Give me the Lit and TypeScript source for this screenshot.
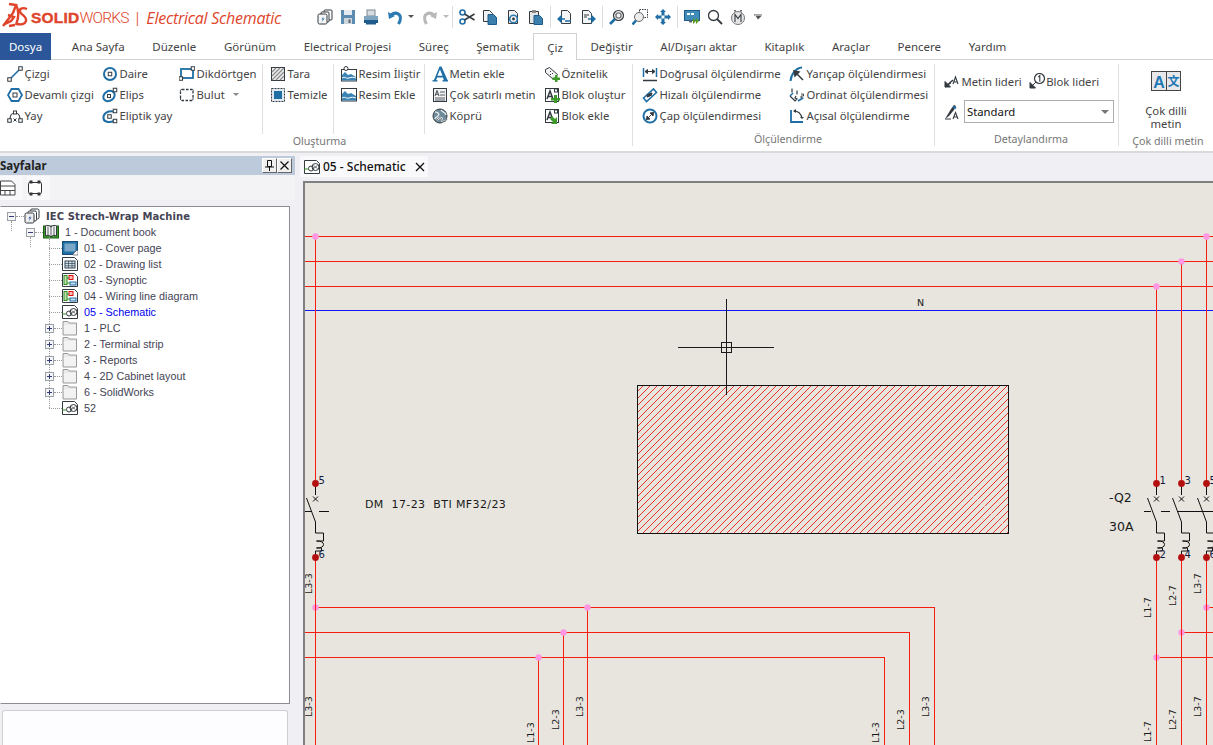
import { LitElement, html, css, svg } from "lit";
import { customElement } from "lit/decorators.js";

const B = "#1f6ea5";
const D = "#333a40";
const G = "#3f9a2c";
const node = (x: number, y: number, s = 3.5) => svg`<rect x=${x - s / 2} y=${y - s / 2} width=${s} height=${s} fill="#fff" stroke=${D} stroke-width="1"/>`;

const icons: Record<string, any> = {
  line: svg`<path d="M3 13L13 3" stroke=${B} stroke-width="1.6"/>${node(2.5, 13.5)}${node(13.5, 2.5)}`,
  circle: svg`<circle cx="8" cy="8" r="6" fill="none" stroke=${B} stroke-width="2"/>${node(8, 8)}`,
  poly: svg`<path d="M4.5 2h7L15 8l-3.5 6h-7L1 8z" fill="none" stroke=${B} stroke-width="1.8"/>${node(8, 8, 4)}`,
  arc: svg`<path d="M3 11C3 3 13 3 13 11" fill="none" stroke=${D} stroke-width="1.2"/>${node(2.5, 12.5)}${node(13.5, 12.5)}${node(8, 4.5, 3)}<path d="M6.5 10.5l3 3m0-3l-3 3" stroke=${D}/>`,
  ellipse: svg`<ellipse cx="7" cy="9" rx="6" ry="4.8" transform="rotate(-35 7 9)" fill="none" stroke=${B} stroke-width="2"/>${node(7, 9, 3)}${node(13, 3, 3.5)}`,
  earc: svg`<path d="M11 3.5C4 2.5 1 7 1.5 10.5 2 14 7 15 12 13" fill="none" stroke=${B} stroke-width="2"/>${node(7.5, 8.5)}${node(13, 3)}${node(13, 13)}`,
  rect: svg`<rect x="2" y="3" width="12" height="9" fill="none" stroke=${B} stroke-width="1.8"/>${node(14, 2.5)}${node(1.8, 12.5)}`,
  cloud: svg`<path d="M3 2.5h2.5M7 2.5h2.500M11 2.500h2M14 4v2.500M14 8v2.500M13 13.500h-2.500M9 13.500H6.500M5 13.500H3M1.500 11V8.500M1.500 7V4.500" stroke=${D} stroke-width="1.3"/><path d="M1.500 4.500C1 3 2 2 3 2.500M13 2.500c1-.5 1.500.500 1 1.500M14 10.500c.5 1.500-.500 3-1 3M3 13.500c-1 0-2-1-1.500-2.500" fill="none" stroke=${D}/>`,
  hatch: svg`<rect x="1.500" y="1.500" width="13" height="13" fill="#eee" stroke=${D}/><path d="M2 6l4-4M2 10l8-8M2 14L14 2M6 14l8-8M10 14l4-4" stroke="#8a8a8a" stroke-width="1.200"/>`,
  clear: svg`<rect x="1.500" y="1.500" width="13" height="13" fill="#dfe9f1" stroke=${D} stroke-dasharray="2 1"/><rect x="4" y="4" width="8" height="8" fill=${B}/>`,
  pic: svg`<rect x=".5" y="3.500" width="15" height="11.500" fill="#fff" stroke=${D}/><path d="M1 9l3-3 3 3 3-1 5 3v3.500H1z" fill="#3a83b5"/><path d="M1 12c3-2 4 1 7 0s4-1 7 0" fill="none" stroke="#fff"/><circle cx="5" cy="2.500" r="2" fill="#fff" stroke=${D}/>`,
  pic2: svg`<rect x=".5" y="1.500" width="15" height="12.500" fill="#fff" stroke=${D}/><path d="M1 7l3-3 3 3 3-1 5 3v4.500H1z" fill="#3a83b5"/><path d="M1 11c3-2 4 1 7 0s4-1 7 0" fill="none" stroke="#fff"/>`,
  bigA: svg`<path d="M.5 15.500h5v-1.200l-1.300-.3 .9-2.500h5.800l.9 2.500-1.300 .3v1.200h6v-1.200l-1-.3L9.500 .5H7.500L2 14l-1.500 .3zM5.400 9.800L8 3.500l2.500 6.300z" fill=${B} fill-rule="evenodd"/>`,
  mtext: svg`<rect x="1.500" y="1.500" width="13" height="13" fill="#f1f1f1" stroke=${D}/><path d="M3 9l2-5.500L7 9M3.800 7.200h2.400" fill="none" stroke=${D} stroke-width=".9"/><path d="M8 5h5M8 8h5M3 11h10M3 13h10" stroke=${D} stroke-width=".8"/>`,
  globe: svg`<circle cx="8" cy="8" r="7" fill="#6f8a9a" stroke=${D}/><path d="M3 4c3 0 5 2 3 4S3 9 3 11M9 2c1 2 5 2 5 5" fill="none" stroke="#dfe6ea" stroke-width="1.500"/><path d="M5 12c2-3 5-3 5 0s4 2 5-1" fill="none" stroke="#fff" stroke-width="2"/><path d="M5 12c2-3 5-3 5 0s4 2 5-1" fill="none" stroke=${D} stroke-width=".8"/>`,
  tag: svg`<path d="M1.500 3.500l4-2 8 7-4 5-8-7z" fill="#f3f3f3" stroke=${D}/><path d="M6 5l1 1M8 7l1 1M6 8l1 1" stroke=${D}/><path d="M11 9h2.500v2.500H16V14h-2.500v2H11v-2H8.500v-2.500H11z" fill=${G}/>`,
  blockAdd: svg`<rect x="1.500" y="1.500" width="13" height="13" fill="#fff" stroke=${D}/><path d="M3 12l3-8 3 8M4.200 9.500h3.600" fill="none" stroke=${D} stroke-width="1.500"/>${node(12, 3.5, 3)}<path d="M10 8h3v3h3v2.500h-3v2.500h-3v-2.500H7V11h3z" fill=${G}/>`,
  blockIns: svg`<rect x="1.500" y="1.500" width="13" height="13" fill="#fff" stroke=${D}/><path d="M3 12l3-8 3 8M4.200 9.500h3.600" fill="none" stroke=${D} stroke-width="1.500"/>${node(12, 3.5, 3)}<path d="M8 8l3 3 2-2v7H7l2-2-3-3z" fill=${G}/>`,
  dimH: svg`<path d="M1 14.500h14" stroke=${D} stroke-width="1.500"/><path d="M1.500 2v9M14.500 2v9" stroke=${B} stroke-width="1.500"/><path d="M3 5.500h10M3 5.500l2.500-2v4zM13 5.500l-2.500-2v4z" stroke=${D} fill=${D}/>`,
  dimA: svg`<path d="M1.500 11l10-9 3 3.500-10 9z" fill="#fff" stroke=${B} stroke-width="1.600"/><path d="M5 10l5-4M5 10l1-3 2 2zM10 6l-1 3-2-2z" stroke=${D} fill=${D}/>`,
  dimD: svg`<circle cx="8" cy="8" r="6.500" fill="none" stroke=${B} stroke-width="2"/><path d="M4.500 11.500l7-7M4.500 11.500l.5-3.500 3 3zM11.500 4.500l-.5 3.500-3-3z" stroke=${D} fill=${D}/>`,
  dimR: svg`<path d="M1.500 15C2 8 7 2 13 1.500" fill="none" stroke=${B} stroke-width="2"/><path d="M14 14L6 6M5 5l5 1-4 4z" stroke=${D} fill=${D} stroke-width="1.500"/>`,
  dimO: svg`<path d="M3 1.500v4M8 3.500v4" stroke=${D} stroke-width="1.200"/><path d="M12 7h2.500v2H12v2h2.500" fill="none" stroke=${D} stroke-width=".9"/><path d="M1 9l5 5 2-2-2-1 1-2" fill="none" stroke=${D} stroke-width="1.200"/><path d="M9 14l5-3" stroke=${B} stroke-width="1.600"/><path d="M1 9l3-3" stroke=${B} stroke-width="1.400"/>`,
  dimAng: svg`<path d="M2 2v12h12" fill="none" stroke=${B} stroke-width="1.800"/><path d="M5 3c4 0 7 3 8 7" fill="none" stroke=${D} stroke-width="1.200"/><path d="M4 3l3-2v4zM13 11l-2-2h4z" fill=${D}/>`,
  leadA: svg`<path d="M1 14l6-4M1 14V8.500L6.500 14z" fill=${D} stroke=${D}/><path d="M1 14L9 7" stroke=${D} stroke-width="1.500"/><path d="M9 11l2.500-7L14 11M10 9h3" fill="none" stroke=${D} stroke-width="1.100"/>`,
  leadB: svg`<path d="M1 15l6-6M1 15V9.500L6.500 15z" fill=${D} stroke=${D}/><circle cx="10.500" cy="5.500" r="5" fill="#fff" stroke=${D} stroke-width="1.200"/><path d="M9.300 4.200l1.500-1.500v6" fill="none" stroke=${D} stroke-width="1.100"/>`,
  style: svg`<path d="M1 15L7 5l3-4 2 1-2 4-5 6z" fill=${D}/><path d="M9 3l3 1" stroke=${B} stroke-width="2"/><path d="M1 15h6" stroke=${D}/><path d="M9 15l2.500-6.500L14 15M10 13h3" fill="none" stroke=${D} stroke-width="1.100"/>`,
  stack: svg`<rect x="7" y="1" width="8" height="10" rx="1" fill="#fff" stroke=${D}/><rect x="4" y="3" width="8" height="10" rx="1" fill="#fff" stroke=${D}/><rect x="1" y="5" width="9" height="10" rx="1.500" fill="#f5f5f5" stroke=${D}/><path d="M6.500 7.500l-2 3h1.500l-1.500 3 3-4H6z" fill=${B}/>`,
  save: svg`<path d="M1 1h14v14H1z" fill="#5b8bb0"/><rect x="4" y="1" width="8" height="5" fill="#e4eaef"/><rect x="4" y="9" width="8" height="6" fill="#cfd6db"/><rect x="8.500" y="10.500" width="2" height="3.500" fill="#567"/>`,
  print: svg`<rect x="4" y="1" width="8" height="6" fill="#d8dde1" stroke="#7c8790"/><path d="M1 7h14v7H1z" fill="#7ea4c0"/><rect x="1" y="11" width="14" height="3" fill="#1d5c8d"/><rect x="3" y="14" width="10" height="1.500" fill="#1d5c8d"/>`,
  undo: svg`<path d="M3 6c5-4 11-1 9 6l-1.500 3" fill="none" stroke="#2b7bb2" stroke-width="3"/><path d="M0 3l1 7 6-3z" fill="#2b7bb2"/>`,
  redo: svg`<path d="M13 6C8 2 2 5 4 12l1.500 3" fill="none" stroke="#b8b8b8" stroke-width="3"/><path d="M16 3l-1 7-6-3z" fill="#b8b8b8"/>`,
  cut: svg`<circle cx="3.500" cy="3.500" r="2.500" fill="none" stroke=${B} stroke-width="1.600"/><circle cx="3.500" cy="12.500" r="2.500" fill="none" stroke=${B} stroke-width="1.600"/><path d="M5.500 5l10 6M5.500 11l10-6" stroke=${D} stroke-width="1.500"/>`,
  copy: svg`<path d="M1.500 1.500h6l3 3v8h-9z" fill="#f2f2f2" stroke=${D}/><path d="M6 5.500h5.500l3 3v7H6z" fill="#3b7fad" stroke="#1d5c8d"/>`,
  copyg: svg`<path d="M3.500 1.500h6l3 3v10h-9z" fill="#f2f2f2" stroke=${D}/><circle cx="8.500" cy="10" r="3.800" fill="none" stroke="#2b7bb2" stroke-width="1.600"/><circle cx="8.500" cy="10" r="1.400" fill=${D}/>`,
  paste: svg`<path d="M1.500 2.500h9v12h-9z" fill="#e6e6e6" stroke=${D}/><rect x="4" y="1" width="4" height="3" fill="#888"/><path d="M6 6.500h5.500l3 3v6H6z" fill="#3b7fad" stroke="#1d5c8d"/>`,
  pageL: svg`<path d="M4.500 1.500h6l3 3v10h-9z" fill="#f5f5f5" stroke=${D}/><path d="M1 10h7M1 10l3-3v6zM8 12h6" stroke=${B} fill=${B} stroke-width="1.300"/>`,
  pageR: svg`<path d="M2.500 1.500h6l3 3v10h-9z" fill="#f5f5f5" stroke=${D}/><path d="M8 10h7M15 10l-3-3v6z" stroke=${B} fill=${B} stroke-width="1.300"/><path d="M4 6h5M4 8h3" stroke=${D}/>`,
  zoom1: svg`<circle cx="9.500" cy="6.500" r="5" fill="#f2f2f2" stroke=${D} stroke-width="1.200"/><circle cx="9.500" cy="6.500" r="2.600" fill="none" stroke="#777" stroke-width="1.400"/><path d="M6 10l-5 5" stroke=${B} stroke-width="2.600"/>`,
  zoom2: svg`<rect x="7.500" y=".5" width="8" height="8" fill="none" stroke=${D} stroke-dasharray="1.500 1"/><circle cx="7" cy="8" r="4.500" fill="#ececec" stroke="#666"/><path d="M4 11.500l-3.500 4" stroke=${B} stroke-width="2.600"/>`,
  pan: svg`<path d="M8 0l3 3H9.500v3.500H13V5l3 3-3 3V9.500H9.500V13H11l-3 3-3-3h1.500V9.500H3V11L0 8l3-3v1.500h3.500V3H5z" fill=${B}/><rect x="6.500" y="6.500" width="3" height="3" fill="#fff"/>`,
  mon: svg`<rect x=".5" y="1.500" width="15" height="10" fill="#3f8cb8" stroke="#1d5c8d"/><rect x="3" y="4" width="3" height="2" fill="#fff"/><rect x="7" y="4" width="3" height="2" fill="#fff"/><rect x="5" y="11.500" width="3" height="2" fill="#666"/><path d="M9 9l3 3-3 3zM12 9l3 3-3 3z" fill="#5c9d1e"/>`,
  mag: svg`<circle cx="6.500" cy="6.500" r="5" fill="none" stroke=${D} stroke-width="1.300"/><path d="M10 10l5 5" stroke=${D} stroke-width="1.800"/>`,
  macro: svg`<circle cx="8" cy="9" r="6.500" fill="#e6e6e6" stroke="#777"/><path d="M5 2.500V1M11 2.500V1" stroke=${D} stroke-width="1.500"/><path d="M5 13V5.500l3 4 3-4V13" fill="none" stroke=${D} stroke-width="1.100"/>`,
  book: svg`<rect x=".5" y="2" width="15" height="12" fill="#3f9a2c" stroke="#1c5e12"/><path d="M8 3C6 1 4 1 2.500 2v10c2-1 4-1 5.500 1 1.500-2 3.500-2 5.500-1V2C12 1 10 1 8 3z" fill="#f5f5f5" stroke=${D}/><path d="M8 3v10M5 2.500v9M11 2.500v9" stroke=${D} stroke-width=".8"/>`,
  tstack: svg`<rect x="6.500" y="1" width="8.500" height="10" rx="1.500" fill="#fff" stroke=${D}/><rect x="4" y="3" width="8.500" height="10" rx="1.500" fill="#fff" stroke=${D}/><rect x="1" y="5" width="9" height="10" rx="1.500" fill="#eee" stroke=${D}/><path d="M6.500 7.500l-2 3h1.500l-1.500 3 3-4H6z" fill="#1f4fa5"/>`,
  cover: svg`<rect x=".5" y="1.500" width="15" height="13" fill="#1f6ea5" stroke="#164e78"/><rect x="2.500" y="3.500" width="11" height="8" fill="#7aa6c8"/><path d="M11 14l4-4 1 1v4h-5z" fill="#fff" stroke=${D} stroke-width=".6"/>`,
  list: svg`<path d="M.5 1.500h12l3 3v10H.5z" fill="#fff" stroke=${D}/><rect x="3" y="5" width="10" height="7" fill="#d7e3ec" stroke="#345"/><path d="M3 7.500h10M3 9.800h10M6.500 5v7M10 5v7" stroke="#345" stroke-width=".7"/>`,
  syn: svg`<path d="M.5 1.500h12l3 3v10H.5z" fill="#fff" stroke=${D}/><rect x="2" y="3.500" width="3" height="9" fill="#bde3b0" stroke="#2f8a20"/><rect x="7" y="3.500" width="4" height="4" fill="#f9b8b8" stroke="#e01010"/><rect x="8" y="10" width="6" height="3" fill="#c7e0f2" stroke=${B}/><path d="M5 6h2M5 11h3" stroke="#2f8a20"/>`,
  sch: svg`<path d="M.5 1.500h12l3 3v10H.5z" fill="#fff" stroke=${D}/><circle cx="7" cy="9.500" r="2.500" fill="none" stroke=${D}/><circle cx="11.500" cy="8" r="3.500" fill="none" stroke=${D}/><path d="M9.500 6.500l4 3M13.500 6.500l-4 3" stroke=${D} stroke-width=".7"/><path d="M0 10h4.500" stroke="#2f8a20"/>`,
  folder: svg`<path d="M1 3V1.500h5L7 3h7.500v12H1z" fill="#e9e9e9" stroke="#9a9a9a"/><path d="M2 5h12v9H2z" fill="#f3f3f3"/>`,
  sheets: svg`<path d="M.5 1h11l3.500 3.500V15H.5z" fill="#fff" stroke="#444"/><path d="M.5 6h14.500M.5 10.500h14.500M5 10.500V15M10 10.500V15" stroke="#444"/>`,
  frame: svg`<rect x="1.500" y="2.500" width="13" height="11" rx="1" fill="#fff" stroke="#333"/><path d="M2.500 .5h3v3h-3zM10.500 .5h3v3h-3zM2.500 12.500h3v3h-3zM10.500 12.500h3v3h-3z" fill="#333"/>`,
};

const ic = (n: string, cls = "") => html`<svg class="ic ${cls}" viewBox="0 0 16 16">${icons[n]}</svg>`;

const tabs = ["Ana Sayfa", "Düzenle", "Görünüm", "Electrical Projesi", "Süreç", "Şematik", "Çiz", "Değiştir", "Al/Dışarı aktar", "Kitaplık", "Araçlar", "Pencere", "Yardım"];

type Item = [string, string, boolean?];
const col = (cls: string, items: Item[]) => html`<div class="col ${cls}">${items.map(([i, t, dd]) => html`<div class="it">${ic(i)}<span>${t}</span>${dd ? html`<i class="dd"></i>` : ""}</div>`)}</div>`;

const qat: string[][] = [
  ["stack", "save", "print", "undo", "*", "redo", "*g"],
  ["cut", "copy", "copyg", "paste"],
  ["pageL", "pageR"],
  ["zoom1", "zoom2", "pan"],
  ["mon", "mag", "macro", "*m"],
];

const treeRows: [string, string, string, string?][] = [
  ["leaf", "cover", "01 - Cover page"],
  ["leaf", "list", "02 - Drawing list"],
  ["leaf", "syn", "03 - Synoptic"],
  ["leaf", "syn", "04 - Wiring line diagram"],
  ["leaf", "sch", "05 - Schematic", "sel"],
  ["fold", "folder", "1 - PLC"],
  ["fold", "folder", "2 - Terminal strip"],
  ["fold", "folder", "3 - Reports"],
  ["fold", "folder", "4 - 2D Cabinet layout"],
  ["fold", "folder", "6 - SolidWorks"],
  ["leaf", "sch", "52"],
];

const RED = "#fa1c0c";
const hl = (x1: number, x2: number, y: number, c = RED) => svg`<line x1=${x1} x2=${x2} y1=${y} y2=${y} stroke=${c} shape-rendering="crispEdges"/>`;
const vl = (x: number, y1: number, y2: number, c = RED) => svg`<line x1=${x} x2=${x} y1=${y1} y2=${y2} stroke=${c} shape-rendering="crispEdges"/>`;
const pink = (x: number, y: number) => svg`<circle cx=${x} cy=${y} r="3.200" fill="#ff97e2"/>`;
const vt = (x: number, y: number, t: string) => svg`<text class="rot" transform="translate(${x} ${y}) rotate(-90)">${t}</text>`;

const pole = (x: number, a: string, b: string) => {
  const p = x + 0.5;
  return svg`
    <path d="M${p} 484V495M${p - 2.500} 496.500l5 5m0-5l-5 5M${p - 9} 498L${p} 522V533H${p + 8}V541H${p + 1}Q${p + 8} 541 ${p + 8} 544.500Q${p + 8} 548 ${p + 1} 548H${p + 6}V551H${p}V557" fill="none" stroke="#111"/>
    ${vl(p, 557, 745)}
    <circle cx=${p} cy="483.500" r="3.400" fill="#b40f0f"/>
    <circle cx=${p} cy="557.500" r="3.400" fill="#b40f0f"/>
    <text class="num" x=${p + 3} y="484">${a}</text>
    <text class="num" x=${p + 3} y="558">${b}</text>`;
};

@customElement("app-root")
export class AppRoot extends LitElement {
  static styles = css`
    :host { display: block; width: 1213px; height: 745px; overflow: hidden; background: #fff; color: #444; font-family: "Noto Sans", "Open Sans", sans-serif; font-size: 11.3px; }
    * { box-sizing: border-box; }
    .ic { width: 16px; height: 16px; flex: none; display: block; }
    .title { height: 33px; display: flex; align-items: center; }
    .logo { width: 317px; flex: none; display: flex; align-items: center; color: #e0452c; white-space: nowrap; padding-left: 1px; padding-top: 3px; }
    .mark { width: 27px; height: 26px; margin: -6px 3px 0 0; flex: none; }
    .solid { font: 900 15.500px "Liberation Sans", sans-serif; letter-spacing: .2px; -webkit-text-stroke: .4px #e0452c; }
    .works { font: 300 15.500px Roboto, sans-serif; letter-spacing: -.8px; }
    .pipe { font: 300 17px Roboto, sans-serif; margin: 0 7px 0 7px; }
    .prod { font: italic 400 16px "Open Sans", sans-serif; letter-spacing: -.25px; }
    .qat { display: flex; align-items: center; }
    .qgroup { display: flex; align-items: center; gap: 7px; padding: 0 6px 0 0; margin-right: 6px; border-right: 1px solid #dcdcdc; height: 22px; }
    .qgroup:first-child { padding-right: 3px; }
    .qgroup:last-child { border: none; }
    .u { margin-left: 2px; }
    .qdd { width: 0; height: 0; border: 3px solid transparent; border-top: 3px solid #555; border-bottom: 0; margin-left: -3px; }
    .qdd.g { border-top-color: #bbb; margin-left: -1px; }
    .qdd.m { width: 8px; height: 6px; border: 0; margin-left: 1px; background: #555; clip-path: polygon(0 0,100% 0,100% 17%,0 17%,0 34%,100% 34%,50% 100%); }

    .tabs { height: 27px; display: flex; border-bottom: 1px solid #d2d2d2; font-size: 11.5px; align-items: stretch; }
    .file { width: 51px; background: #2b579a; color: #fff; display: flex; align-items: center; justify-content: center; margin-bottom: -1px; margin-right: 7px; }
    .tab { padding: 0 13.800px; display: flex; align-items: center; white-space: nowrap; }
    .tab.on { border: 1px solid #d2d2d2; border-bottom: 0; background: #fff; margin-bottom: -1px; padding: 0 12.800px; }

    .ribbon { height: 93px; display: flex; border-bottom: 2px solid #dadada; white-space: nowrap; }
    .group { height: 82px; margin-top: 4px; border-right: 1px solid #dfdfdf; display: flex; flex-direction: column; flex: none; }
    .g1 { width: 633px; padding-left: 7px; }
    .g2 { width: 302px; padding-left: 9px; }
    .g3 { width: 184px; padding-left: 9px; }
    .g4 { flex: 1; border: 0; }
    .body { height: 70px; display: flex; }
    .sub { display: flex; height: 70px; border-right: 1px solid #dfdfdf; padding-left: 7px; }
    .sub.first { padding-left: 0; width: 256px; }
    .sub.s2 { width: 71px; }
    .sub.s3 { width: 91px; }
    .sub.last { border: 0; }
    .label { flex: 1; text-align: center; color: #777; font-size: 10.700px; line-height: 13px; padding-top: 1px; }
    .col { display: flex; flex-direction: column; margin-top: -1px; }
    .c1 { width: 95px; } .c2 { width: 77px; } .c3 { width: 83px; }
    .c4 { width: 64px; } .c5 { width: 84px; } .c6 { width: 112px; } .c7 { width: 81px; }
    .c8 { width: 147px; } .c9 { width: 145px; }
    .it { height: 21px; display: flex; align-items: center; gap: 1.500px; }
    .dd { width: 0; height: 0; border: 3px solid transparent; border-top: 3px solid #888; border-bottom: 0; margin-left: 7px; }
    .det { padding-top: 8px; display: flex; flex-direction: column; }
    .detrow { display: flex; align-items: center; height: 18px; }
    .detrow .it { height: 18px; }
    .detrow .it + .it { margin-left: 7px; }
    .comborow { display: flex; align-items: center; margin-top: 10px; gap: 4px; }
    .combo { width: 150px; height: 23px; border: 1px solid #adadad; display: flex; align-items: center; justify-content: space-between; padding: 0 4px 0 2px; color: #111; }
    .combo i { width: 0; height: 0; border: 4px solid transparent; border-top: 4px solid #777; border-bottom: 0; }
    .multi { display: flex; flex-direction: column; align-items: center; height: 70px; line-height: 13px; text-align: center; padding-top: 7px; width: 94px; }
    .multi svg { width: 30px; height: 20px; margin-bottom: 13px; }
    .g4 .label { width: 98px; white-space: nowrap; }

    .main { display: flex; height: 592px; background: #f0eff4; }
    .left { width: 295px; flex: none; padding-top: 3px; display: flex; flex-direction: column; }
    .phead { height: 19px; background: #bccadc; display: flex; align-items: center; justify-content: space-between; padding-right: 3px; font-weight: 700; color: #222; font-size: 11.500px; }
    .pbtns { display: flex; }
    .pbtn { width: 15px; height: 15px; background: #f0f0f0; border: 1px solid; border-color: #fff #666 #666 #fff; display: flex; align-items: center; justify-content: center; }
    .pbtn svg { width: 9px; height: 11px; display: block; }
    .ptools { height: 25px; display: flex; align-items: center; gap: 4px; background: #f3f3f6; flex: none; margin-bottom: 6px; }
    .ptools .box { width: 23px; height: 24px; display: flex; align-items: center; background: #f8f8fa; }
    .tree { position: relative; width: 290px; height: 498px; background: #fff; border: 1px solid #8c8c94; border-left-color: #fff; padding-top: 1px; flex: none; color: #445; font: 10.800px "Liberation Sans", sans-serif; }
    .row { height: 16px; display: flex; align-items: center; white-space: nowrap; }
    .row span { margin-left: 6px; }
    .r0 { padding-left: 6px; font: 700 10px "DejaVu Sans", sans-serif; letter-spacing: .09px; }
    .r1 { padding-left: 25px; }
    .rl { padding-left: 61px; }
    .rf { padding-left: 44px; }
    .exp { width: 9px; height: 9px; border: 1px solid #9aa0a8; flex: none; position: relative; background: #f5f5f5; }
    .exp::before { content: ""; position: absolute; left: 1px; right: 1px; top: 3px; height: 1px; background: #333a80; }
    .exp.p::after { content: ""; position: absolute; top: 1px; bottom: 1px; left: 3px; width: 1px; background: #333a80; }
    .dot { width: 8px; border-top: 1px dotted #999; flex: none; }
    .row span.sel { color: #0000f0; }
    .vd { position: absolute; border-left: 1px dotted #999; }
    .v1 { left: 10px; top: 14px; height: 10px; }
    .v2 { left: 29px; top: 30px; height: 10px; }
    .v3 { left: 48px; top: 30px; height: 171px; }
    .h3 { position: absolute; left: 48px; width: 13px; border-top: 1px dotted #999; }
    .low { margin: 6px 0 0 2px; width: 286px; flex: 1; background: #fdfcfe; border: 1px solid #d0d0d0; border-bottom: 0; border-radius: 3px 3px 0 0; }
    .right { flex: 1; display: flex; flex-direction: column; padding-left: 5px; min-width: 0; padding-top: 3px; }
    .dtab { width: 128px; height: 21px; background: #f9f9fb; display: flex; align-items: center; padding-left: 4px; color: #111; font-size: 12px; font-weight: 500; border-radius: 2px 2px 0 0; flex: none; }
    .dtab .x { margin-left: auto; margin-right: 3px; width: 10px; height: 10px; }
    .dtab span { margin-left: 3px; }
    .canvas { margin-top: 4px; flex: 1; margin-left: 3px; border-left: 2px solid #808080; border-top: 2px solid #808080; background: #e7e5de; min-height: 0; overflow: hidden; }
    .canvas svg { display: block; width: 908px; height: 562px; }
    .canvas text { font-family: "DejaVu Sans", sans-serif; fill: #1a1a1a; white-space: pre; }
    .canvas .rot { font-size: 9.500px; }
    .canvas .num { font-size: 10px; fill: #101840; }
    .canvas .lbl { font-size: 11px; letter-spacing: .4px; }
    .canvas .n { font-size: 9.500px; }
    .canvas .big { font-size: 12.500px; }
  `;

  render() {
    const holeLines = [236.5, 261.5, 286.5];
    return html`
      <div class="title">
        <div class="logo">
          <svg class="mark" viewBox="0 0 27 26" fill="none" stroke="#e0452c" stroke-width="2.400">
            <path d="M8 2l7 1-3 8M12 11L2 24M7 13l6 2-3 4-6 3"/>
            <path d="M15 3c3 5 3 12 0 20M14 23l-6 1"/>
            <path d="M26 7c-5-2-8 0-7 3s7 4 6 9c-1 3-5 4-9 3"/>
          </svg>
          <span class="solid">SOLID</span><span class="works">WORKS</span><span class="pipe">|</span><span class="prod">Electrical Schematic</span>
        </div>
        <div class="qat">
          ${qat.map((g) => html`<div class="qgroup">${g.map((n) => n === "*" ? html`<i class="qdd"></i>` : n === "*g" ? html`<i class="qdd g"></i>` : n === "*m" ? html`<i class="qdd m"></i>` : ic(n, n === "undo" ? "u" : ""))}</div>`)}
        </div>
      </div>
      <div class="tabs">
        <div class="file">Dosya</div>
        ${tabs.map((t) => html`<div class="tab ${t === "Çiz" ? "on" : ""}">${t}</div>`)}
      </div>
      <div class="ribbon">
        <div class="group g1">
          <div class="body">
            <div class="sub first">
              ${col("c1", [["line", "Çizgi"], ["poly", "Devamlı çizgi"], ["arc", "Yay"]])}
              ${col("c2", [["circle", "Daire"], ["ellipse", "Elips"], ["earc", "Eliptik yay"]])}
              ${col("c3", [["rect", "Dikdörtgen"], ["cloud", "Bulut", true]])}
            </div>
            <div class="sub s2">${col("c4", [["hatch", "Tara"], ["clear", "Temizle"]])}</div>
            <div class="sub s3">${col("c5", [["pic", "Resim İliştir"], ["pic2", "Resim Ekle"]])}</div>
            <div class="sub last">
              ${col("c6", [["bigA", "Metin ekle"], ["mtext", "Çok satırlı metin"], ["globe", "Köprü"]])}
              ${col("c7", [["tag", "Öznitelik"], ["blockAdd", "Blok oluştur"], ["blockIns", "Blok ekle"]])}
            </div>
          </div>
          <div class="label">Oluşturma</div>
        </div>
        <div class="group g2">
          <div class="body">
            ${col("c8", [["dimH", "Doğrusal ölçülendirme"], ["dimA", "Hizalı ölçülendirme"], ["dimD", "Çap ölçülendirmesi"]])}
            ${col("c9", [["dimR", "Yarıçap ölçülendirmesi"], ["dimO", "Ordinat ölçülendirmesi"], ["dimAng", "Açısal ölçülendirme"]])}
          </div>
          <div class="label">Ölçülendirme</div>
        </div>
        <div class="group g3">
          <div class="body det">
            <div class="detrow">
              <div class="it">${ic("leadA")}<span>Metin lideri</span></div>
              <div class="it">${ic("leadB")}<span>Blok lideri</span></div>
            </div>
            <div class="comborow">
              ${ic("style")}
              <div class="combo"><span>Standard</span><i></i></div>
            </div>
          </div>
          <div class="label">Detaylandırma</div>
        </div>
        <div class="group g4">
          <div class="body">
            <div class="multi">
              <svg viewBox="0 0 30 20">
                <rect x=".5" y=".5" width="29" height="19" fill="#e8e8ea" stroke="#444"/>
                <path d="M15.500 .5v19" stroke="#444"/>
                <text x="8" y="17" text-anchor="middle" font-family="Liberation Sans" font-weight="700" font-size="16" fill="#1f78b4">A</text>
                <text x="22.500" y="15" text-anchor="middle" font-family="Noto Sans CJK SC" font-weight="700" font-size="12" fill="#1f78b4">文</text>
              </svg>
              <div>Çok dilli<br />metin</div>
            </div>
          </div>
          <div class="label">Çok dilli metin</div>
        </div>
      </div>
      <div class="main">
        <div class="left">
          <div class="phead"><span>Sayfalar</span><div class="pbtns">
            <div class="pbtn"><svg viewBox="0 0 9 11"><path d="M2.500 .5h4v6h-4zM0 7h9M4.500 7v4" fill="none" stroke="#111"/></svg></div>
            <div class="pbtn"><svg viewBox="0 0 9 11"><path d="M.5 1.500l8 8M8.500 1.500l-8 8" fill="none" stroke="#111" stroke-width="1.200"/></svg></div>
          </div></div>
          <div class="ptools"><div class="box">${ic("sheets")}</div><div class="box">${ic("frame")}</div></div>
          <div class="tree">
            <div class="vd v1"></div><div class="vd v2"></div><div class="vd v3"></div>
            <div class="row r0"><i class="exp"></i><i class="dot"></i>${ic("tstack")}<span>IEC Strech-Wrap Machine</span></div>
            <div class="row r1"><i class="exp"></i><i class="dot"></i>${ic("book")}<span>1 - Document book</span></div>
            ${treeRows.map(([k, i, t, c]) => k === "leaf"
              ? html`<div class="row rl"><div class="h3"></div>${ic(i)}<span class=${c || ""}>${t}</span></div>`
              : html`<div class="row rf"><i class="exp p"></i><i class="dot"></i>${ic(i)}<span>${t}</span></div>`)}
          </div>
          <div class="low"></div>
        </div>
        <div class="right">
          <div class="dtab">${ic("sch")}<span>05 - Schematic</span>
            <svg class="x" viewBox="0 0 10 10"><path d="M1 1l8 8M9 1l-8 8" stroke="#111" stroke-width="1.300"/></svg>
          </div>
          <div class="canvas">
            <svg viewBox="305 183 908 562">
              <defs>
                <pattern id="h" width="7" height="7" patternUnits="userSpaceOnUse">
                  <path d="M-1 8L8 -1M-1 1L1 -1M6 8L8 6" stroke="#e8332a" stroke-width="1"/>
                </pattern>
              </defs>
              ${holeLines.map((y) => hl(304, 1213, y))}
              ${hl(304, 1213, 310.5, "#1414ff")}
              ${vl(315.5, 236, 484)}
              ${vl(1156.5, 286, 484)}
              ${vl(1181.5, 261, 484)}
              ${vl(1206.5, 236, 484)}
              ${pink(315.5, 236.5)} ${pink(1206.5, 236.5)} ${pink(1181.5, 261.5)} ${pink(1156.5, 286.5)}
              <text class="n" x="917" y="306">N</text>

              <rect x="637.500" y="385.500" width="371" height="148" fill="url(#h)" stroke="#111"/>
              <path d="M850 460H935L1004 525" fill="none" stroke="#e7e5de" stroke-width=".8"/>
              ${vl(726.5, 299, 395, "#1a1a1a")}
              ${hl(678, 774, 347.5, "#1a1a1a")}
              <rect x="721.500" y="342.500" width="10" height="10" fill="none" stroke="#1a1a1a"/>

              ${hl(315, 935, 607.5)} ${hl(304, 910, 632.5)} ${hl(304, 885, 657.5)}
              ${vl(934.5, 607, 745)} ${vl(909.5, 632, 745)} ${vl(884.5, 657, 745)}
              ${vl(587.5, 607, 745)} ${vl(563.5, 632, 745)} ${vl(538.5, 657, 745)}
              ${pink(315.5, 607.5)} ${pink(587.5, 607.5)} ${pink(563.5, 632.5)} ${pink(538.5, 657.5)}
              ${hl(1206, 1213, 607.5)} ${hl(1181, 1213, 632.5)} ${hl(1156, 1213, 657.5)}
              ${pink(1206.5, 607.5)} ${pink(1181.5, 632.5)} ${pink(1156.5, 657.5)}

              ${pole(315, "5", "6")}
              <path d="M305 511.500h7M319 511.500h10" stroke="#111"/>
              ${pole(1156, "1", "2")} ${pole(1181, "3", "4")} ${pole(1206, "5", "6")}
              <path d="M1144 511.500h7M1161 511.500h9M1177 511.500h36" stroke="#111"/>

              <text class="lbl" x="365" y="508">DM  17-23  BTI MF32/23</text>
              <text class="big" x="1109" y="502">-Q2</text>
              <text class="big" x="1109" y="531">30A</text>

              ${vt(312, 594, "L3-3")} ${vt(312, 717, "L3-3")}
              ${vt(534, 743, "L1-3")} ${vt(559, 730, "L2-3")} ${vt(583, 717, "L3-3")}
              ${vt(879, 743, "L1-3")} ${vt(904, 730, "L2-3")} ${vt(929, 717, "L3-3")}
              ${vt(1151, 618, "L1-7")} ${vt(1176, 606, "L2-7")} ${vt(1201, 594, "L3-7")}
              ${vt(1151, 742, "L1-7")} ${vt(1176, 730, "L2-7")} ${vt(1201, 717, "L3-7")}
            </svg>
          </div>
        </div>
      </div>
    `;
  }
}
